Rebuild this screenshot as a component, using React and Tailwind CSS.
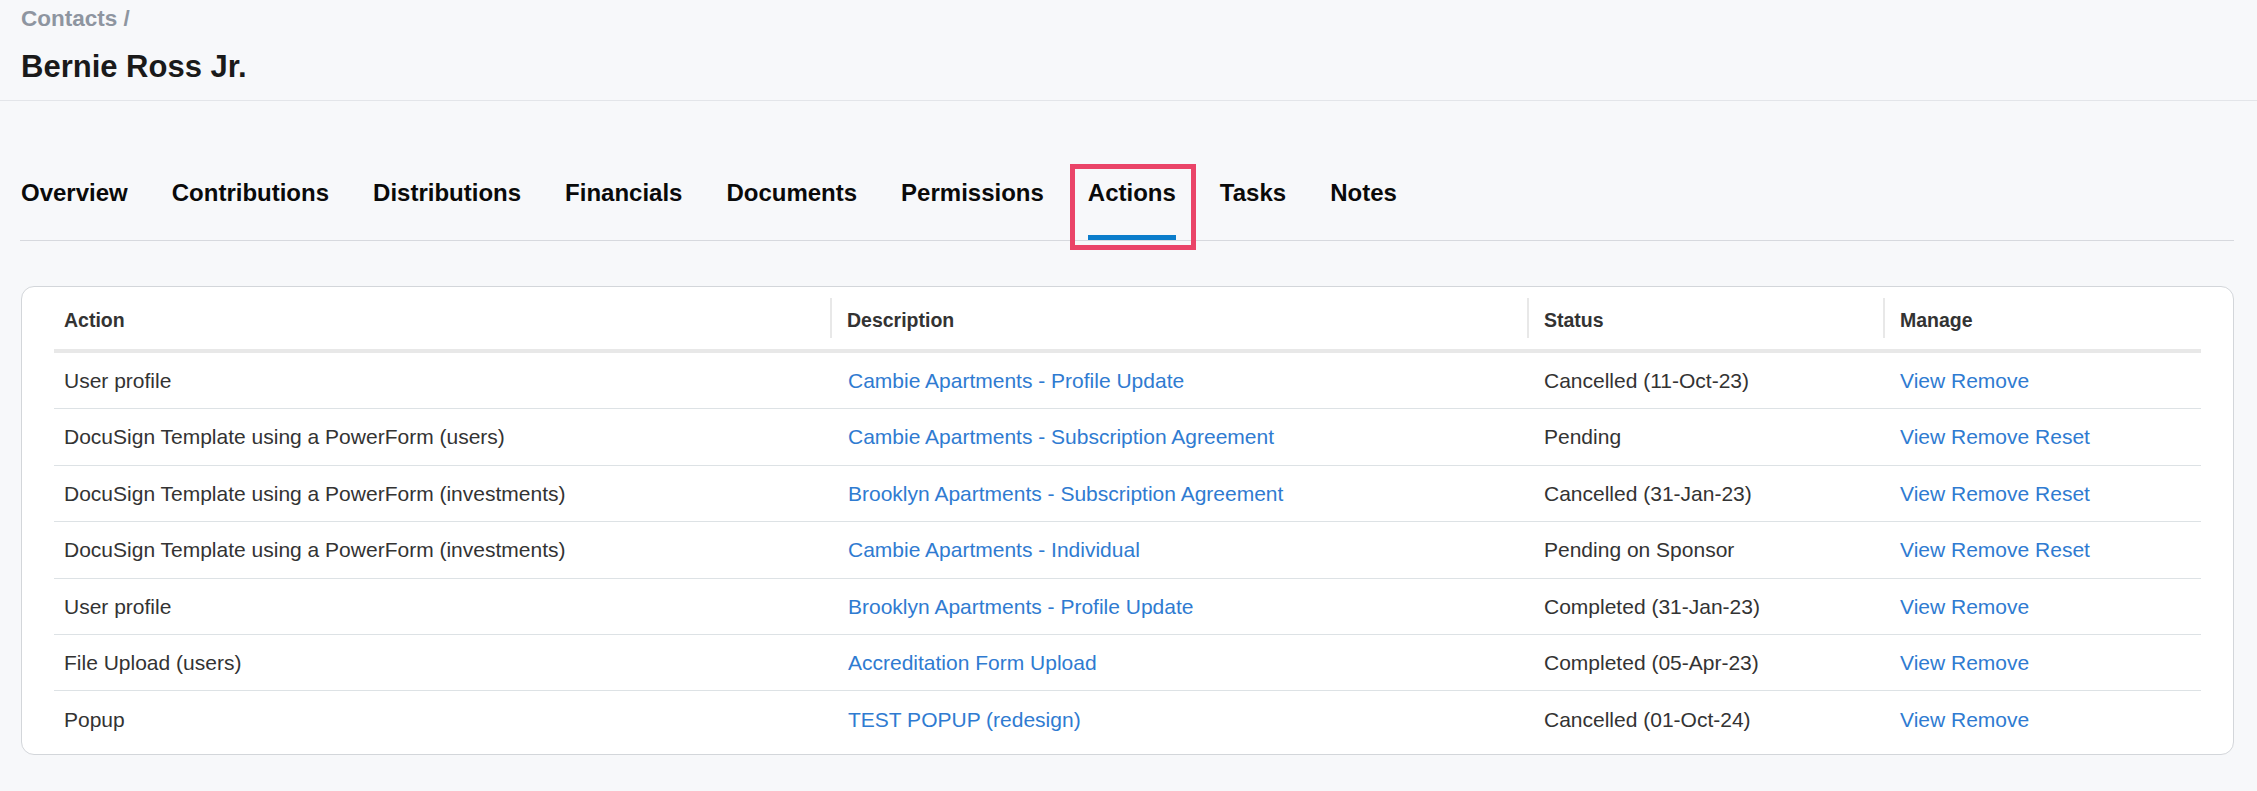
import React from "react";

const tabs = [
  "Overview",
  "Contributions",
  "Distributions",
  "Financials",
  "Documents",
  "Permissions",
  "Actions",
  "Tasks",
  "Notes",
];

const rows = [
  ["User profile", "Cambie Apartments - Profile Update", "Cancelled (11-Oct-23)", false],
  ["DocuSign Template using a PowerForm (users)", "Cambie Apartments - Subscription Agreement", "Pending", true],
  ["DocuSign Template using a PowerForm (investments)", "Brooklyn Apartments - Subscription Agreement", "Cancelled (31-Jan-23)", true],
  ["DocuSign Template using a PowerForm (investments)", "Cambie Apartments - Individual", "Pending on Sponsor", true],
  ["User profile", "Brooklyn Apartments - Profile Update", "Completed (31-Jan-23)", false],
  ["File Upload (users)", "Accreditation Form Upload", "Completed (05-Apr-23)", false],
  ["Popup", "TEST POPUP (redesign)", "Cancelled (01-Oct-24)", false],
];

function Th({ children, first }) {
  return (
    <th className="h-[66px] p-0 text-left align-middle border-b-4 border-[#e8e8e8]">
      {first ? (
        <div className="pl-[10px] pt-[6px] text-[19.5px] font-bold text-[#333333]">{children}</div>
      ) : (
        <div className="flex h-[40px] items-center border-l-2 border-[#e8e8e8] pl-[15px] pt-[6px] text-[19.5px] font-bold text-[#333333]">
          {children}
        </div>
      )}
    </th>
  );
}

export default function App() {
  return (
    <div className="min-h-screen bg-[#f7f8fa] font-['Liberation_Sans',Arial,sans-serif]">
      <header className="border-b border-[#e3e5e9] pl-[21px] pt-[6px] pb-[16px]">
        <div className="text-[22.5px] leading-[26px] font-bold text-[#8e95a0]">Contacts /</div>
        <h1 className="mt-[18px] text-[31px] leading-[34px] font-bold text-[#1a1a1a]">Bernie Ross Jr.</h1>
      </header>

      <div className="pl-[20px] pr-[23px]">
        <nav className="flex gap-[44px] border-b border-[#d7d9de] pt-[78px] pl-[1px]">
          {tabs.map((t) => {
            const active = t === "Actions";
            return (
              <div key={t} className="relative flex flex-col">
                <span className="text-[24px] leading-[28px] font-bold text-[#0a0a0a]">{t}</span>
                <span className={`mt-[28px] h-[5px] ${active ? "bg-[#0b7dcb]" : "bg-transparent"}`} />
                {active && (
                  <span className="pointer-events-none absolute -left-[18px] -right-[20px] -top-[15px] -bottom-[10px] border-[5px] border-[#ea4468]" />
                )}
              </div>
            );
          })}
        </nav>

        <div className="mt-[45px] ml-[1px] rounded-[13px] border border-[#d3d6da] bg-white px-[32px] pb-[6px]">
          <table className="w-full table-fixed border-separate border-spacing-0">
            <colgroup>
              <col className="w-[776px]" />
              <col className="w-[697px]" />
              <col className="w-[356px]" />
              <col />
            </colgroup>
            <thead>
              <tr>
                <Th first>Action</Th>
                <Th>Description</Th>
                <Th>Status</Th>
                <Th>Manage</Th>
              </tr>
            </thead>
            <tbody className="text-[21px] text-[#333333]">
              {rows.map((r, i) => {
                const b = i < rows.length - 1 ? "border-b border-[#dde2e5]" : "";
                return (
                  <tr key={i}>
                    <td className={`h-[56.4px] p-0 pl-[10px] align-middle whitespace-nowrap ${b}`}>{r[0]}</td>
                    <td className={`h-[56.4px] p-0 pl-[18px] align-middle whitespace-nowrap ${b}`}>
                      <a className="text-[#2f7bd1] cursor-pointer">{r[1]}</a>
                    </td>
                    <td className={`h-[56.4px] p-0 pl-[17px] align-middle whitespace-nowrap ${b}`}>{r[2]}</td>
                    <td className={`h-[56.4px] p-0 pl-[17px] align-middle whitespace-nowrap text-[#2f7bd1] ${b}`}>
                      <a className="cursor-pointer">View</a> <a className="cursor-pointer">Remove</a>
                      {r[3] && (
                        <>
                          {" "}
                          <a className="cursor-pointer">Reset</a>
                        </>
                      )}
                    </td>
                  </tr>
                );
              })}
            </tbody>
          </table>
        </div>
      </div>
    </div>
  );
}
